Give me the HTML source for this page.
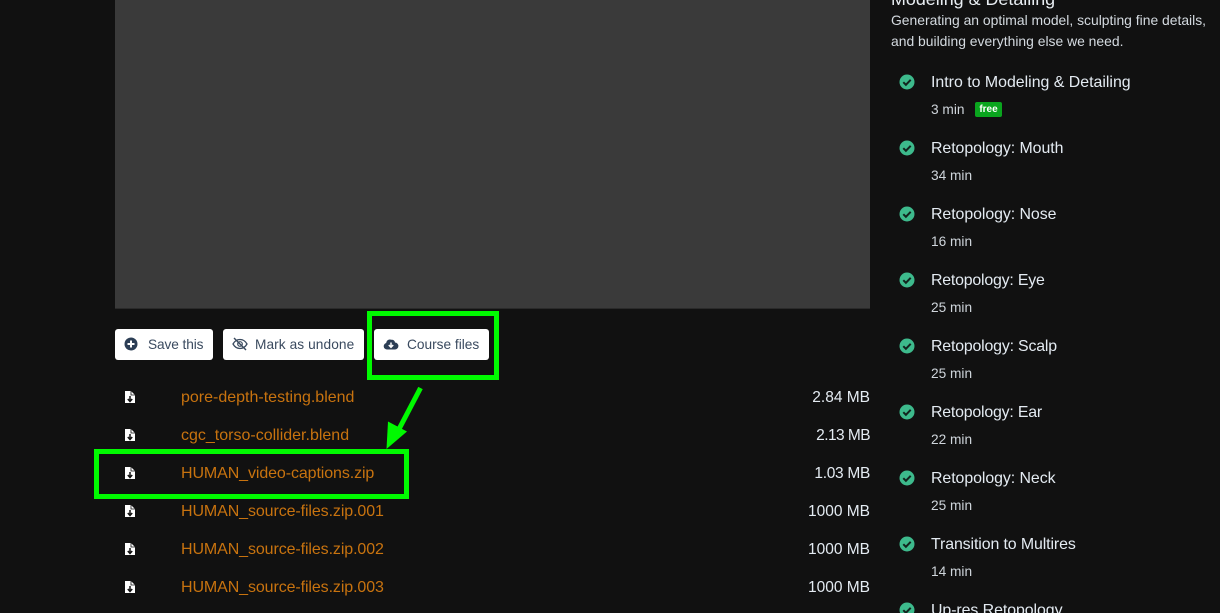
<!DOCTYPE html>
<html><head><meta charset="utf-8"><style>
*{box-sizing:border-box}
html,body{margin:0;padding:0;width:1220px;height:613px;overflow:hidden;background:#111;font-family:"Liberation Sans",sans-serif}
.a{position:absolute;white-space:nowrap}
.video{position:absolute;left:115px;top:0;width:755px;height:309px;background:#3a3a3a;border-bottom:1px solid #2a2a2a}
.btn{position:absolute;top:329px;height:31px;background:#fff;border-radius:3px;color:#3a4a5f;font-size:13.7px;line-height:31px}
.btn span{position:absolute;top:0;white-space:nowrap}
.btn svg{position:absolute;top:8px}
.f{position:absolute;left:181px;color:#c8730f;font-size:16px;line-height:20px;white-space:nowrap}
.h{letter-spacing:-.1px}
.s{position:absolute;right:350px;color:#e4ebf2;font-size:15.5px;line-height:20px;white-space:nowrap}
.fi{position:absolute;left:124px}
.t{position:absolute;left:931px;color:#e4ebf2;font-size:15.9px;line-height:20px;white-space:nowrap}
.m{position:absolute;left:931px;color:#cfd5db;font-size:13.7px;line-height:16px;white-space:nowrap}
.c{position:absolute;left:898.5px}
.box{position:absolute;border:5px solid #00fa00}
</style></head><body>
<div style="position:relative;width:1220px;height:613px;overflow:hidden">
<div class="video"></div>

<div class="btn" style="left:115px;width:98px"><svg style="left:9px" width="14" height="14" viewBox="0 0 14 14"><circle cx="7" cy="7" r="6.5" fill="#2c3e55"/><path d="M7 3.5v7M3.5 7h7" stroke="#fff" stroke-width="2"/></svg><span style="left:33px;letter-spacing:-.1px">Save this</span></div>
<div class="btn" style="left:223px;width:141px"><svg style="left:9px" width="16" height="14" viewBox="0 0 16 14"><path d="M1 7C3 3.5 5.5 2.5 8 2.5S13 3.5 15 7c-2 3.500-4.500 4.500-7 4.500S3 10.500 1 7z" fill="none" stroke="#3a4a5f" stroke-width="1.300"/><circle cx="8" cy="7" r="2.300" fill="none" stroke="#3a4a5f" stroke-width="1.200"/><path d="M2 1l12 12" stroke="#3a4a5f" stroke-width="1.400"/></svg><span style="left:32px;letter-spacing:.08px">Mark as undone</span></div>
<div class="btn" style="left:374px;width:115px"><svg style="left:9px" width="16" height="14" viewBox="0 0 16 14"><path d="M4 12.500a3.300 3.300 0 0 1-.8-6.500A3.800 3.800 0 0 1 8.500 2.800a3 3 0 0 1 3.500 2.700 3.500 3.500 0 0 1-.2 7z" fill="#2c3e55"/><path d="M8 5.500v4.500M5.800 8L8 10.300 10.200 8" stroke="#fff" stroke-width="1.500" fill="none"/></svg><span style="left:33px">Course files</span></div>

<svg class="fi" style="top:390px" width="12" height="14" viewBox="0 0 12 14"><path d="M1 1h6l4 4v8H1z" fill="#fff"/><path d="M7 1v4h4" fill="none" stroke="#111" stroke-width=".8"/><path d="M6 6v5M3.800 9L6 11.500 8.200 9" stroke="#111" stroke-width="1.500" fill="none"/></svg>
<div class="f" style="top:388px">pore-depth-testing.blend</div><div class="s" style="top:388px">2.84 MB</div>
<svg class="fi" style="top:428px" width="12" height="14" viewBox="0 0 12 14"><path d="M1 1h6l4 4v8H1z" fill="#fff"/><path d="M7 1v4h4" fill="none" stroke="#111" stroke-width=".8"/><path d="M6 6v5M3.800 9L6 11.500 8.200 9" stroke="#111" stroke-width="1.500" fill="none"/></svg>
<div class="f" style="top:426px">cgc_torso-collider.blend</div><div class="s" style="top:426px;letter-spacing:-.55px">2.13 MB</div>
<svg class="fi" style="top:466px" width="12" height="14" viewBox="0 0 12 14"><path d="M1 1h6l4 4v8H1z" fill="#fff"/><path d="M7 1v4h4" fill="none" stroke="#111" stroke-width=".8"/><path d="M6 6v5M3.800 9L6 11.500 8.200 9" stroke="#111" stroke-width="1.500" fill="none"/></svg>
<div class="f h" style="top:464px">HUMAN_video-captions.zip</div><div class="s" style="top:464px;letter-spacing:-.3px">1.03 MB</div>
<svg class="fi" style="top:504px" width="12" height="14" viewBox="0 0 12 14"><path d="M1 1h6l4 4v8H1z" fill="#fff"/><path d="M7 1v4h4" fill="none" stroke="#111" stroke-width=".8"/><path d="M6 6v5M3.800 9L6 11.500 8.200 9" stroke="#111" stroke-width="1.500" fill="none"/></svg>
<div class="f h" style="top:502px">HUMAN_source-files.zip.001</div><div class="s" style="top:502px">1000 MB</div>
<svg class="fi" style="top:542px" width="12" height="14" viewBox="0 0 12 14"><path d="M1 1h6l4 4v8H1z" fill="#fff"/><path d="M7 1v4h4" fill="none" stroke="#111" stroke-width=".8"/><path d="M6 6v5M3.800 9L6 11.500 8.200 9" stroke="#111" stroke-width="1.500" fill="none"/></svg>
<div class="f h" style="top:540px">HUMAN_source-files.zip.002</div><div class="s" style="top:540px">1000 MB</div>
<svg class="fi" style="top:580px" width="12" height="14" viewBox="0 0 12 14"><path d="M1 1h6l4 4v8H1z" fill="#fff"/><path d="M7 1v4h4" fill="none" stroke="#111" stroke-width=".8"/><path d="M6 6v5M3.800 9L6 11.500 8.200 9" stroke="#111" stroke-width="1.500" fill="none"/></svg>
<div class="f h" style="top:578px">HUMAN_source-files.zip.003</div><div class="s" style="top:578px">1000 MB</div>

<div class="box" style="left:367px;top:311px;width:132px;height:69px"></div>
<div class="box" style="left:94px;top:449px;width:315px;height:50px"></div>
<svg class="a" style="left:0;top:0" width="1220" height="613"><path d="M420.500 388L398 431" stroke="#00fa00" stroke-width="5" fill="none"/><path d="M386.500 449L388 421.500 407 431.500z" fill="#00fa00"/></svg>

<div class="a" style="left:891px;top:-11px;color:#e8edf2;font-size:17.9px;line-height:20px">Modeling &amp; Detailing</div>
<div class="a" style="left:891px;top:10px;color:#d4dae0;font-size:13.9px;line-height:20px">Generating an optimal model, sculpting fine details,</div>
<div class="a" style="left:891px;top:31px;color:#d4dae0;font-size:13.9px;line-height:20px">and building everything else we need.</div>

<svg class="c" style="top:74px" width="16" height="16" viewBox="0 0 16 16"><circle cx="8" cy="8" r="7.500" fill="#3dba8c"/><path d="M4.300 8.200l2.600 2.600 4.800-5" stroke="#12241e" stroke-width="2" fill="none"/></svg>
<div class="t" style="top:73px">Intro to Modeling &amp; Detailing</div>
<div class="m" style="top:102px">3 min</div>
<div class="a" style="left:975px;top:102px;width:27px;height:15px;background:#0aa51e;border-radius:2px;color:#fff;font-size:10px;font-weight:bold;line-height:15px;text-align:center">free</div>

<svg class="c" style="top:140px" width="16" height="16" viewBox="0 0 16 16"><circle cx="8" cy="8" r="7.500" fill="#3dba8c"/><path d="M4.300 8.200l2.600 2.600 4.800-5" stroke="#12241e" stroke-width="2" fill="none"/></svg>
<div class="t" style="top:139px;letter-spacing:-.06px">Retopology: Mouth</div><div class="m" style="top:168px">34 min</div>
<svg class="c" style="top:206px" width="16" height="16" viewBox="0 0 16 16"><circle cx="8" cy="8" r="7.500" fill="#3dba8c"/><path d="M4.300 8.200l2.600 2.600 4.800-5" stroke="#12241e" stroke-width="2" fill="none"/></svg>
<div class="t" style="top:205px;letter-spacing:-.06px">Retopology: Nose</div><div class="m" style="top:234px">16 min</div>
<svg class="c" style="top:272px" width="16" height="16" viewBox="0 0 16 16"><circle cx="8" cy="8" r="7.500" fill="#3dba8c"/><path d="M4.300 8.200l2.600 2.600 4.800-5" stroke="#12241e" stroke-width="2" fill="none"/></svg>
<div class="t" style="top:271px;letter-spacing:-.2px">Retopology: Eye</div><div class="m" style="top:300px">25 min</div>
<svg class="c" style="top:338px" width="16" height="16" viewBox="0 0 16 16"><circle cx="8" cy="8" r="7.500" fill="#3dba8c"/><path d="M4.300 8.200l2.600 2.600 4.800-5" stroke="#12241e" stroke-width="2" fill="none"/></svg>
<div class="t" style="top:337px;letter-spacing:-.18px">Retopology: Scalp</div><div class="m" style="top:366px">25 min</div>
<svg class="c" style="top:404px" width="16" height="16" viewBox="0 0 16 16"><circle cx="8" cy="8" r="7.500" fill="#3dba8c"/><path d="M4.300 8.200l2.600 2.600 4.800-5" stroke="#12241e" stroke-width="2" fill="none"/></svg>
<div class="t" style="top:403px;letter-spacing:-.2px">Retopology: Ear</div><div class="m" style="top:432px">22 min</div>
<svg class="c" style="top:470px" width="16" height="16" viewBox="0 0 16 16"><circle cx="8" cy="8" r="7.500" fill="#3dba8c"/><path d="M4.300 8.200l2.600 2.600 4.800-5" stroke="#12241e" stroke-width="2" fill="none"/></svg>
<div class="t" style="top:469px;letter-spacing:-.06px">Retopology: Neck</div><div class="m" style="top:498px">25 min</div>
<svg class="c" style="top:536px" width="16" height="16" viewBox="0 0 16 16"><circle cx="8" cy="8" r="7.500" fill="#3dba8c"/><path d="M4.300 8.200l2.600 2.600 4.800-5" stroke="#12241e" stroke-width="2" fill="none"/></svg>
<div class="t" style="top:535px;letter-spacing:-.1px">Transition to Multires</div><div class="m" style="top:564px">14 min</div>
<svg class="c" style="top:602px" width="16" height="16" viewBox="0 0 16 16"><circle cx="8" cy="8" r="7.500" fill="#3dba8c"/><path d="M4.300 8.200l2.600 2.600 4.800-5" stroke="#12241e" stroke-width="2" fill="none"/></svg>
<div class="t" style="top:601px;letter-spacing:-.06px">Up-res Retopology</div>
</div>
</body></html>
